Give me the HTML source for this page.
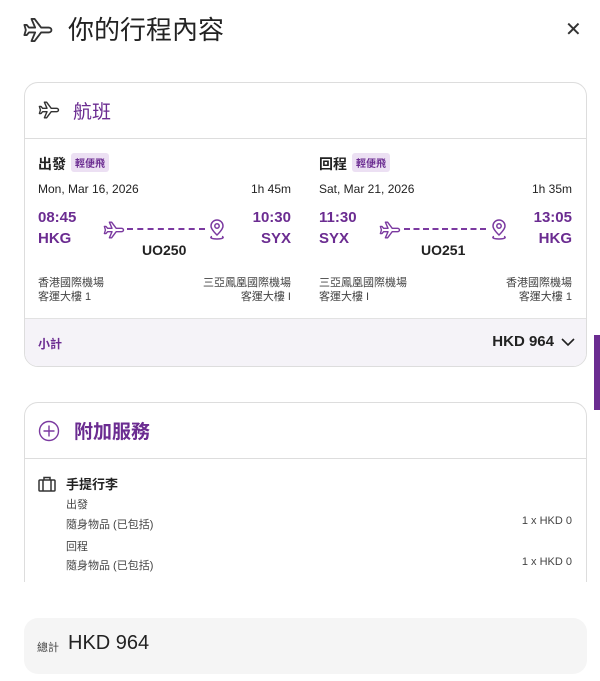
<!DOCTYPE html>
<html><head><meta charset="utf-8"><style>
*{margin:0;padding:0;box-sizing:border-box}
body{width:600px;height:681px;background:#fff;font-family:"Liberation Sans","Noto Sans CJK TC",sans-serif;color:#222;position:relative;overflow:hidden}
.a{position:absolute;white-space:nowrap}
.p{color:#6b2c91}
.b{font-weight:bold}
.card{position:absolute;left:24px;width:563px;border:1px solid #ddd;border-radius:14px;background:#fff;overflow:hidden}
.tag{display:inline-block;background:#ece0f3;color:#6b2c91;font-size:10px;padding:2px 4px;border-radius:3px;margin-left:5px;vertical-align:2px;font-weight:bold}
.dash{position:absolute;border-top:2px dashed #7b3aa0;height:0}
.s{font-size:11px;color:#444}
</style></head><body>
<svg width="0" height="0" style="position:absolute"><defs><path id="pl" d="M21.5 12c0-1-1-1.7-2-1.7h-5.3L9.6 4.2H7.4l2.6 6.1H5.6L4 8.4H2.4l1 3.6-1 3.6H4l1.6-1.9H10l-2.6 6.1h2.2l4.6-6.1h5.3c1 0 2-.7 2-1.7z"/></defs></svg>
<svg class="a" style="left:21px;top:13px" width="34" height="34" viewBox="0 0 24 24" fill="none" stroke="#333" stroke-width="1.3" stroke-linejoin="round"><use href="#pl"/></svg>
<div class="a" style="left:68px;top:10px;font-size:26px;color:#222">你的行程內容</div>
<div class="a" style="left:565px;top:17px;font-size:20px;color:#333">✕</div>

<div class="card" style="top:82px;height:285px">
  <div style="height:56px;border-bottom:1px solid #ddd;position:relative">
    <svg class="a" style="left:12px;top:15px" width="24" height="24" viewBox="0 0 24 24" fill="none" stroke="#333" stroke-width="1.4" stroke-linejoin="round"><use href="#pl"/></svg>
    <div class="a p" style="left:48px;top:14px;font-size:19px">航班</div>
  </div>
  <div style="position:absolute;left:0;top:235px;width:100%;height:50px;background:#f5f3f8;border-top:1px solid #e2e2e2">
    <div class="a p b" style="left:13px;top:16px;font-size:12px">小計</div>
    <div class="a b" style="right:32px;top:14px;font-size:15px;color:#222">HKD 964</div>
    <svg class="a" style="left:536px;top:18px" width="14" height="10" viewBox="0 0 14 10"><path d="M1 2l6 6 6-6" fill="none" stroke="#222" stroke-width="1.6"/></svg>
  </div>
</div>

<!-- outbound -->
<div class="a b" style="left:38px;top:153px;font-size:14px">出發<span class="tag">輕便飛</span></div>
<div class="a" style="left:38px;top:182px;font-size:12px">Mon, Mar 16, 2026</div>
<div class="a" style="right:309px;top:182px;font-size:12px">1h 45m</div>
<div class="a p b" style="left:38px;top:209px;font-size:15px">08:45</div>
<div class="a p b" style="left:38px;top:230px;font-size:15px">HKG</div>
<div class="a p b" style="right:309px;top:209px;font-size:15px">10:30</div>
<div class="a p b" style="right:309px;top:230px;font-size:15px">SYX</div>
<svg class="a" style="left:102px;top:218px" width="24" height="24" viewBox="0 0 24 24" fill="none" stroke="#7b3aa0" stroke-width="1.4" stroke-linejoin="round"><use href="#pl"/></svg>
<div class="dash" style="left:127px;top:228px;width:78px"></div>
<svg class="a" style="left:208px;top:219px" width="18" height="22" viewBox="0 0 18 22" fill="none" stroke="#7b3aa0" stroke-width="1.5"><path d="M9 16s-6-5.5-6-9a6 6 0 0 1 12 0c0 3.5-6 9-6 9z"/><circle cx="9" cy="7" r="2.2"/><path d="M4 17.5c-2 .6-2 2.5 5 2.5s7-1.9 5-2.5"/></svg>
<div class="a b" style="left:142px;top:242px;font-size:14px">UO250</div>
<div class="a s" style="left:38px;top:274px">香港國際機場</div>
<div class="a s" style="left:38px;top:288px">客運大樓 1</div>
<div class="a s" style="right:309px;top:274px">三亞鳳凰國際機場</div>
<div class="a s" style="right:309px;top:288px">客運大樓 I</div>

<!-- return -->
<div class="a b" style="left:319px;top:153px;font-size:14px">回程<span class="tag">輕便飛</span></div>
<div class="a" style="left:319px;top:182px;font-size:12px">Sat, Mar 21, 2026</div>
<div class="a" style="right:28px;top:182px;font-size:12px">1h 35m</div>
<div class="a p b" style="left:319px;top:209px;font-size:15px">11:30</div>
<div class="a p b" style="left:319px;top:230px;font-size:15px">SYX</div>
<div class="a p b" style="right:28px;top:209px;font-size:15px">13:05</div>
<div class="a p b" style="right:28px;top:230px;font-size:15px">HKG</div>
<svg class="a" style="left:378px;top:218px" width="24" height="24" viewBox="0 0 24 24" fill="none" stroke="#7b3aa0" stroke-width="1.4" stroke-linejoin="round"><use href="#pl"/></svg>
<div class="dash" style="left:404px;top:228px;width:82px"></div>
<svg class="a" style="left:490px;top:219px" width="18" height="22" viewBox="0 0 18 22" fill="none" stroke="#7b3aa0" stroke-width="1.5"><path d="M9 16s-6-5.5-6-9a6 6 0 0 1 12 0c0 3.5-6 9-6 9z"/><circle cx="9" cy="7" r="2.2"/><path d="M4 17.5c-2 .6-2 2.5 5 2.5s7-1.9 5-2.5"/></svg>
<div class="a b" style="left:421px;top:242px;font-size:14px">UO251</div>
<div class="a s" style="left:319px;top:274px">三亞鳳凰國際機場</div>
<div class="a s" style="left:319px;top:288px">客運大樓 I</div>
<div class="a s" style="right:28px;top:274px">香港國際機場</div>
<div class="a s" style="right:28px;top:288px">客運大樓 1</div>

<div class="a" style="left:594px;top:335px;width:6px;height:75px;background:#6b2c91"></div>

<div class="card" style="top:402px;height:200px">
  <div style="height:56px;border-bottom:1px solid #ddd;position:relative">
    <svg class="a" style="left:13px;top:17px" width="22" height="22" viewBox="0 0 22 22" fill="none" stroke="#7b3aa0" stroke-width="1.4"><circle cx="11" cy="11" r="9.5"/><path d="M11 5.5v11M5.5 11h11"/></svg>
    <div class="a p b" style="left:49px;top:14px;font-size:19px">附加服務</div>
  </div>
</div>
<svg class="a" style="left:38px;top:476px" width="18" height="16" viewBox="0 0 18 16" fill="none" stroke="#333" stroke-width="1.5"><rect x="1" y="4" width="16" height="11" rx="1"/><path d="M6 4V1.5h6V4M5 4v11M13 4v11"/></svg>
<div class="a b" style="left:66px;top:474px;font-size:13px">手提行李</div>
<div class="a s" style="left:66px;top:496px">出發</div>
<div class="a s" style="left:66px;top:516px">隨身物品 (已包括)</div>
<div class="a s" style="right:28px;top:515px">1 x HKD 0</div>
<div class="a s" style="left:66px;top:538px">回程</div>
<div class="a s" style="left:66px;top:557px">隨身物品 (已包括)</div>
<div class="a s" style="right:28px;top:556px">1 x HKD 0</div>
<div class="a" style="left:0;top:582px;width:594px;height:99px;background:#fff"></div>

<div class="a" style="left:24px;top:618px;width:563px;height:56px;background:#f5f5f5;border-radius:14px">
  <div class="a" style="left:13px;top:21px;font-size:11px;color:#444">總計</div>
  <div class="a" style="left:44px;top:14px;font-size:20px;color:#222">HKD 964</div>
</div>
</body></html>
